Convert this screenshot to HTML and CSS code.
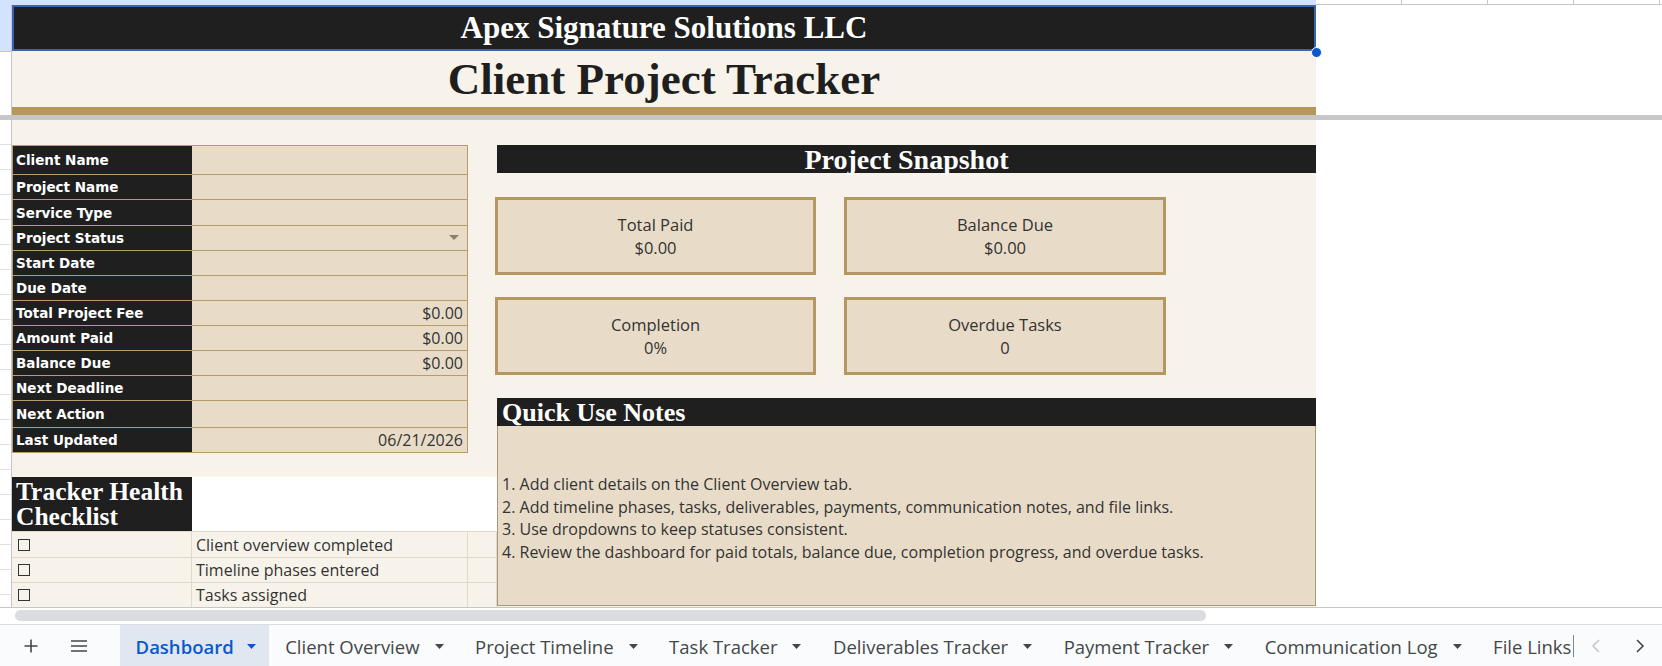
FILE: index.html
```html
<!DOCTYPE html>
<html lang="en">
<head>
    <meta charset="utf-8">
    <meta name="viewport" content="width=device-width, initial-scale=1">
    <title>Client Project Tracker</title>
    <link rel="stylesheet" href="styles.css">
</head>
<body>
    <div id="app">
        <!-- column header strip -->
        <div class="colheads">
            <div class="colheads-sel"></div>
            <div class="colheads-rest"></div>
        </div>

        <!-- frozen rows -->
        <div class="frozen">
            <div class="gutter gutter-top"></div>
            <div class="banner">
                <div class="company">Apex Signature Solutions LLC</div>
                <div class="title">Client Project Tracker</div>
                <div class="gold"></div>
                <span class="handle"></span>
            </div>
            <div class="blank"></div>
        </div>
        <div class="freeze"></div>

        <!-- sheet body -->
        <div class="body">
            <div class="gutter gutter-body"></div>
            <div class="sheet">
                <div class="left">
                    <div class="info">
                        <div class="info-row first"><span class="key">Client Name</span><span class="val"></span></div>
                        <div class="info-row"><span class="key">Project Name</span><span class="val"></span></div>
                        <div class="info-row mid"><span class="key">Service Type</span><span class="val"></span></div>
                        <div class="info-row"><span class="key">Project Status</span><span class="val"><svg class="dd" width="10" height="6" viewBox="0 0 10 6"><path d="M0 0h10L5 5z" fill="#8c7f6c"/></svg></span></div>
                        <div class="info-row"><span class="key">Start Date</span><span class="val"></span></div>
                        <div class="info-row"><span class="key">Due Date</span><span class="val"></span></div>
                        <div class="info-row"><span class="key">Total Project Fee</span><span class="val">$0.00</span></div>
                        <div class="info-row"><span class="key">Amount Paid</span><span class="val">$0.00</span></div>
                        <div class="info-row"><span class="key">Balance Due</span><span class="val">$0.00</span></div>
                        <div class="info-row"><span class="key">Next Deadline</span><span class="val"></span></div>
                        <div class="info-row wide"><span class="key">Next Action</span><span class="val"></span></div>
                        <div class="info-row"><span class="key">Last Updated</span><span class="val">06/21/2026</span></div>
                    </div>

                    <div class="checklist">
                        <div class="check-head">
                            <div class="check-title">Tracker Health Checklist</div>
                            <div class="check-blank"></div>
                        </div>
                        <div class="check-row first">
                            <span class="cell"><span class="box"></span></span>
                            <span class="cell txt">Client overview completed</span>
                            <span class="cell"></span>
                        </div>
                        <div class="check-row">
                            <span class="cell"><span class="box"></span></span>
                            <span class="cell txt">Timeline phases entered</span>
                            <span class="cell"></span>
                        </div>
                        <div class="check-row">
                            <span class="cell"><span class="box"></span></span>
                            <span class="cell txt">Tasks assigned</span>
                            <span class="cell"></span>
                        </div>
                    </div>
                </div>

                <div class="right">
                    <div class="section-head center">Project Snapshot</div>
                    <div class="cards">
                        <div class="card"><span>Total Paid</span><span>$0.00</span></div>
                        <div class="card"><span>Balance Due</span><span>$0.00</span></div>
                        <div class="card"><span>Completion</span><span>0%</span></div>
                        <div class="card"><span>Overdue Tasks</span><span>0</span></div>
                    </div>
                    <div class="section-head notes-head">Quick Use Notes</div>
                    <div class="notes">
                        <p>1. Add client details on the Client Overview tab.</p>
                        <p>2. Add timeline phases, tasks, deliverables, payments, communication notes, and file links.</p>
                        <p>3. Use dropdowns to keep statuses consistent.</p>
                        <p>4. Review the dashboard for paid totals, balance due, completion progress, and overdue tasks.</p>
                    </div>
                </div>
            </div>
            <div class="blank"></div>
        </div>

        <div class="hscroll"><div class="thumb"></div></div>

        <!-- sheet tabs -->
        <div class="tabs">
            <span class="tool">
                <svg width="16" height="16" viewBox="0 0 16 16"><path d="M8 1.5v13M1.5 8h13" stroke="#444746" stroke-width="1.6"/></svg>
            </span>
            <span class="tool">
                <svg width="18" height="14" viewBox="0 0 18 14"><path d="M1 2h16M1 7h16M1 12h16" stroke="#444746" stroke-width="1.6"/></svg>
            </span>
            <div class="tab-list">
                <span class="tab active">Dashboard<svg class="caret" width="9" height="5" viewBox="0 0 9 5"><path d="M0 0h9L4.5 5z"/></svg></span>
                <span class="tab">Client Overview<svg class="caret" width="9" height="5" viewBox="0 0 9 5"><path d="M0 0h9L4.5 5z"/></svg></span>
                <span class="tab">Project Timeline<svg class="caret" width="9" height="5" viewBox="0 0 9 5"><path d="M0 0h9L4.5 5z"/></svg></span>
                <span class="tab">Task Tracker<svg class="caret" width="9" height="5" viewBox="0 0 9 5"><path d="M0 0h9L4.5 5z"/></svg></span>
                <span class="tab">Deliverables Tracker<svg class="caret" width="9" height="5" viewBox="0 0 9 5"><path d="M0 0h9L4.5 5z"/></svg></span>
                <span class="tab">Payment Tracker<svg class="caret" width="9" height="5" viewBox="0 0 9 5"><path d="M0 0h9L4.5 5z"/></svg></span>
                <span class="tab">Communication Log<svg class="caret" width="9" height="5" viewBox="0 0 9 5"><path d="M0 0h9L4.5 5z"/></svg></span>
                <span class="tab tail">File Links</span>
            </div>
            <span class="cursor"></span>
            <span class="nav">
                <svg width="10" height="16" viewBox="0 0 10 16"><path d="M8 2L2 8l6 6" fill="none" stroke="#c4c7c5" stroke-width="1.6"/></svg>
            </span>
            <span class="nav">
                <svg width="10" height="16" viewBox="0 0 10 16"><path d="M2 2l6 6-6 6" fill="none" stroke="#444746" stroke-width="1.6"/></svg>
            </span>
        </div>
    </div>
</body>
</html>
```

FILE: styles.css
```css
body {
    margin: 0;
    background: #ffffff;
    font-family: 'Open Sans', 'Noto Sans', sans-serif;
    color: #333333;
    overflow: hidden;
}

#app {
    width: 1662px;
    height: 666px;
    display: flex;
    flex-direction: column;
}

/* column headers, mostly scrolled away */
.colheads {
    height: 5px;
    display: flex;
}

.colheads-sel {
    width: 1316px;
    background: #d3e3fd;
}

.colheads-rest {
    flex: 1;
    border-bottom: 1px solid #c4c7c5;
    background: repeating-linear-gradient(to right, #ffffff 0 85px, #c4c7c5 85px 86px);
}

.frozen {
    height: 110px;
    display: flex;
}

.gutter {
    width: 11px;
    border-right: 1px solid #c4c7c5;
    background: #ffffff;
}

.gutter-top {
    background: linear-gradient(to bottom, #d3e3fd 0 46px, #c4c7c5 46px 47px, #ffffff 47px);
}

.gutter-body {
    background: repeating-linear-gradient(to bottom, #ffffff 0 24px, #e1e1e1 24px 25px);
}

.banner {
    width: 1304px;
    position: relative;
}

.company {
    height: 46px;
    background: #1f1f1f;
    color: #ffffff;
    font-family: 'Liberation Serif', serif;
    font-weight: bold;
    font-size: 31px;
    display: flex;
    align-items: center;
    justify-content: center;
    box-shadow: inset 0 0 0 2px #3a62b3;
}

.title {
    height: 56px;
    background: #f8f3ea;
    color: #1f1f1f;
    font-family: 'Liberation Serif', serif;
    font-weight: bold;
    font-size: 45px;
    display: flex;
    align-items: center;
    justify-content: center;
}

.gold {
    height: 8px;
    background: #b8975f;
}

/* selection fill handle */
.handle {
    position: absolute;
    right: -6px;
    top: 42px;
    width: 9px;
    height: 9px;
    border-radius: 50%;
    background: #0b57d0;
    border: 1.5px solid #ffffff;
}

.blank {
    flex: 1;
    background: #ffffff;
}

.freeze {
    height: 5px;
    background: #c7c7c7;
}

.body {
    height: 487px;
    display: flex;
    border-bottom: 1px solid #c4c7c5;
}

.sheet {
    width: 1304px;
    background: #f8f3ea;
    display: grid;
    grid-template-columns: 485px 819px;
}

/* client info table */
.info {
    width: 454px;
    margin-top: 25px;
    border: 1px solid #b89b6a;
}

.info-row {
    display: grid;
    grid-template-columns: 179px 1fr;
    height: 25px;
    box-sizing: border-box;
    border-top: 1px solid #b89b6a;
}

.info-row.first {
    height: 28px;
    border-top: 0;
}

.info-row.mid {
    height: 26px;
}

.info-row.wide {
    height: 27px;
}

.key {
    background: #1f1f1f;
    color: #ffffff;
    font-family: 'DejaVu Sans', sans-serif;
    font-weight: bold;
    font-size: 13.5px;
    padding-left: 3px;
    display: flex;
    align-items: center;
}

.val {
    background: #e8dcc8;
    font-size: 16px;
    color: #333333;
    display: flex;
    align-items: center;
    justify-content: flex-end;
    padding-right: 4px;
}

.dd {
    margin-right: 4px;
}

/* checklist */
.checklist {
    margin-top: 24px;
}

.check-head {
    display: grid;
    grid-template-columns: 180px 305px;
    height: 54px;
}

.check-title {
    background: #1f1f1f;
    color: #ffffff;
    font-family: 'Liberation Serif', serif;
    font-weight: bold;
    font-size: 25.5px;
    line-height: 25px;
    padding: 2px 4px 0;
}

.check-blank {
    background: #ffffff;
}

.check-row {
    display: grid;
    grid-template-columns: 180px 276px 29px;
    height: 25px;
    box-sizing: border-box;
    border-top: 1px solid #e1d8c6;
}

.check-row.first {
    height: 26px;
}

.cell {
    border-right: 1px solid #e1d8c6;
    display: flex;
    align-items: center;
    font-size: 16px;
    color: #333333;
}

.cell.txt {
    padding-left: 4px;
}

.box {
    width: 10px;
    height: 10px;
    border: 1.5px solid #333333;
    margin-left: 6px;
}

/* snapshot and notes */
.right {
    display: flex;
    flex-direction: column;
}

.section-head {
    height: 28px;
    box-sizing: border-box;
    background: #1f1f1f;
    color: #ffffff;
    font-family: 'Liberation Serif', serif;
    font-weight: bold;
    font-size: 26px;
    display: flex;
    align-items: center;
    margin-top: 25px;
    padding-top: 2px;
}

.section-head.center {
    justify-content: center;
    font-size: 28px;
}

.notes-head {
    margin-top: 23px;
    padding-left: 5px;
}

.cards {
    display: grid;
    grid-template-columns: 321px 322px;
    grid-auto-rows: 78px;
    column-gap: 28px;
    row-gap: 22px;
    margin: 24px 0 0 -2px;
}

.card {
    border: 3px solid #b59762;
    background: #e8dcc8;
    display: flex;
    flex-direction: column;
    align-items: center;
    justify-content: center;
    font-size: 16.5px;
    line-height: 23px;
    color: #333333;
}

.notes {
    height: 180px;
    box-sizing: border-box;
    background: #e8dcc8;
    border: 1px solid #a8987a;
    border-top: 0;
    display: flex;
    flex-direction: column;
    justify-content: center;
    padding: 5px 0 0 4px;
    font-size: 16px;
    line-height: 22.5px;
    color: #333333;
}

.notes p {
    margin: 0;
}

.hscroll {
    height: 16px;
    padding: 2px 0 0 15px;
    box-sizing: border-box;
}

.thumb {
    width: 1191px;
    height: 11px;
    border-radius: 6px;
    background: #dadce0;
}

/* sheet tabs bar */
.tabs {
    height: 41px;
    border-top: 1px solid #dadce0;
    background: #f9fbfd;
    display: flex;
    align-items: stretch;
    padding-left: 8px;
    color: #444746;
}

.tool {
    width: 46px;
    display: flex;
    align-items: center;
    justify-content: center;
}

.tool + .tool {
    width: 50px;
    margin-right: 16px;
}

.tab-list {
    width: 1460px;
    display: flex;
    overflow: hidden;
}

.tab {
    display: flex;
    align-items: center;
    padding: 1px 15.5px 0 16px;
    font-size: 18.5px;
    white-space: nowrap;
}

.tab.tail {
    padding-right: 0;
}

.tab.active {
    padding-right: 13px;
    background: #e1e7f0;
    color: #0b57d0;
    font-weight: 600;
}

.caret {
    margin-left: 15px;
    fill: #444746;
}

.tab.active .caret {
    margin-left: 13.5px;
    fill: #0b57d0;
}

.cursor {
    width: 1px;
    height: 22px;
    align-self: center;
    background: #80868b;
}

.nav {
    width: 44px;
    display: flex;
    align-items: center;
    justify-content: center;
}
```
